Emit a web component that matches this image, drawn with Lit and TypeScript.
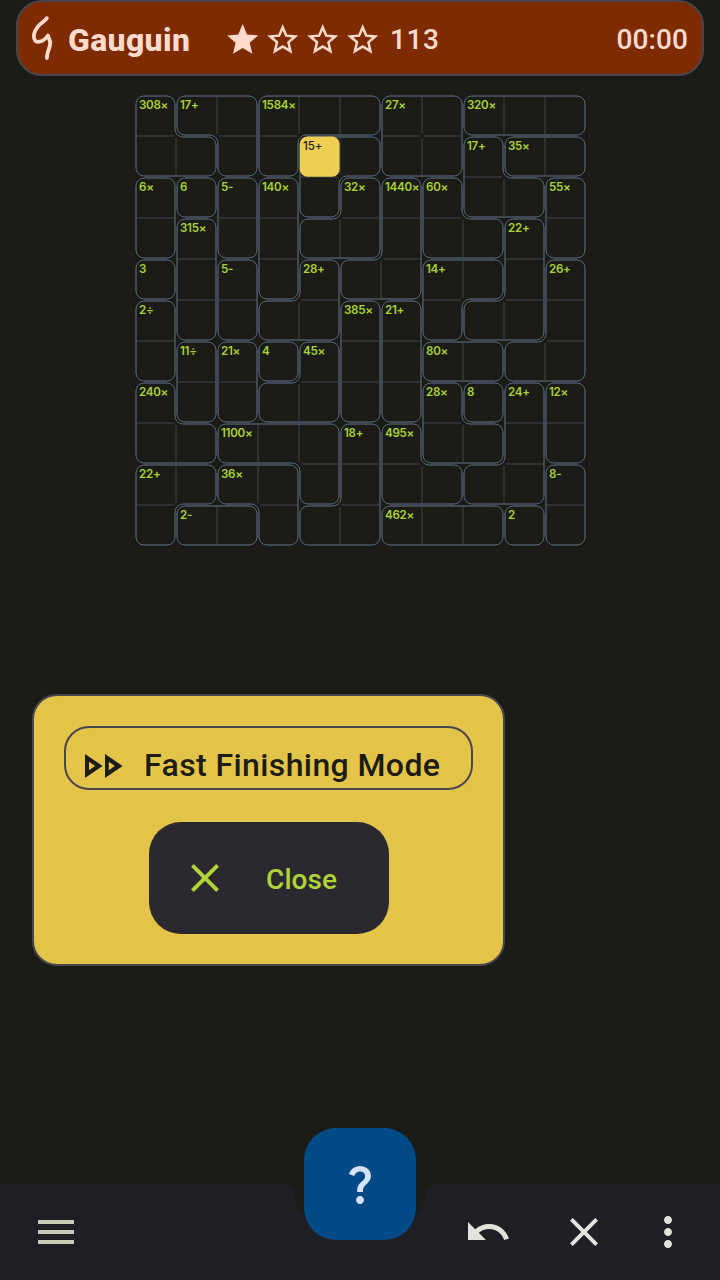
import { LitElement, html, css, svg } from "lit";
import { customElement, property } from "lit/decorators.js";

/** One letter per cell; cells sharing a letter form a cage. */
const CAGES = [
  "ABBCCCDDEEE",
  "AABCFFDDGHH",
  "IJKLFMNOGGP",
  "IQKLMMNOORP",
  "SQTLUNNVVRW",
  "XQTUUYZVRRW",
  "XabcdYZeeWW",
  "fabddYZghij",
  "ffkkklmggij",
  "nnooklmmiip",
  "nqqollrrrsp",
];

const LABELS: Record<string, string> = {
  A: "308×", B: "17+", C: "1584×", D: "27×", E: "320×", F: "15+", G: "17+", H: "35×",
  I: "6×", J: "6", K: "5-", L: "140×", M: "32×", N: "1440×", O: "60×", P: "55×",
  Q: "315×", R: "22+", S: "3", T: "5-", U: "28+", V: "14+", W: "26+", X: "2÷",
  Y: "385×", Z: "21+", a: "11÷", b: "21×", c: "4", d: "45×", e: "80×", f: "240×",
  g: "28×", h: "8", i: "24+", j: "12×", k: "1100×", l: "18+", m: "495×", n: "22+",
  o: "36×", p: "8-", q: "2-", r: "462×", s: "2",
};

const SIZE = 11;
const PITCH = 41;
const RADIUS = 8;
const SELECTED = { row: 1, col: 4 };

const cage = (r: number, c: number) => (CAGES[r] && CAGES[r][c]) || "";

/** Builds the straight cage walls, the rounded corners and the thin inner lines. */
function boardPaths() {
  let walls = "";
  let corners = "";
  let inner = "";
  for (let r = 0; r < SIZE; r++) {
    for (let c = 0; c < SIZE; c++) {
      const id = cage(r, c);
      const mx = (c + 0.5) * PITCH;
      const my = (r + 0.5) * PITCH;
      const half = PITCH / 2;
      // u points out of the cell through a side, v runs along that side
      for (const [ux, uy] of [[0, -1], [1, 0], [0, 1], [-1, 0]]) {
        const vx = -uy;
        const vy = ux;
        const at = (u: number, v: number) => `${mx + ux * u + vx * v} ${my + uy * u + vy * v}`;
        if (cage(r + uy, c + ux) === id) {
          if (ux + uy > 0) inner += `M${at(half, -half + 2)}L${at(half, half - 2)}`;
          continue;
        }
        const end = (s: number) => {
          const side = cage(r + s * vy, c + s * vx) === id;
          const diag = cage(r + uy + s * vy, c + ux + s * vx) === id;
          if (!side) return half - 1 - RADIUS;
          return diag ? half + 1 - RADIUS : half;
        };
        walls += `M${at(half - 1, -end(-1))}L${at(half - 1, end(1))}`;
        if (cage(r + vy, c + vx) !== id) {
          corners += `M${at(half - 1, half - 1 - RADIUS)}A${RADIUS} ${RADIUS} 0 0 1 ${at(half - 1 - RADIUS, half - 1)}`;
        } else if (cage(r + uy + vy, c + ux + vx) === id) {
          corners += `M${at(half - 1, half + 1 - RADIUS)}A${RADIUS} ${RADIUS} 0 0 0 ${at(half - 1 + RADIUS, half + 1)}`;
        }
      }
    }
  }
  return { walls, corners, inner };
}

const ICONS = {
  menu: "M3 18h18v-2H3v2zm0-5h18v-2H3v2zm0-7v2h18V6H3z",
  undo: "M12.5 8c-2.65 0-5.05.99-6.9 2.6L2 7v9h9l-3.62-3.62c1.39-1.16 3.16-1.88 5.12-1.88 3.54 0 6.55 2.31 7.6 5.5l2.37-.78C21.08 11.03 17.15 8 12.5 8z",
  close: "M19 6.41L17.59 5 12 10.59 6.41 5 5 6.41 10.59 12 5 17.59 6.41 19 12 13.41 17.59 19 19 17.59 13.41 12z",
  more: "M12 8c1.1 0 2-.9 2-2s-.9-2-2-2-2 .9-2 2 .9 2 2 2zm0 2c-1.1 0-2 .9-2 2s.9 2 2 2 2-.9 2-2-.9-2-2-2zm0 6c-1.1 0-2 .9-2 2s.9 2 2 2 2-.9 2-2-.9-2-2-2z",
  star: "M12 17.27L18.18 21l-1.64-7.03L22 9.24l-7.19-.61L12 2 9.19 8.63 2 9.24l5.46 4.73L5.82 21z",
  starOutline: "M22 9.24l-7.19-.62L12 2 9.19 8.63 2 9.24l5.46 4.73L5.82 21 12 17.27 18.18 21l-1.63-7.03L22 9.24zM12 15.4l-3.76 2.27 1-4.28-3.32-2.88 4.38-.38L12 6.1l1.71 4.04 4.38.38-3.32 2.88 1 4.28L12 15.4z",
  fast: "M15.9 9.86 18.93 12l-3.03 2.14V9.86M6 9.86 9.03 12 6 14.14V9.86M14 6v12l8.8-6L14 6zM4 6v12l8.8-6L4 6z",
  help: "M11.07 12.85c.77-1.39 2.25-2.21 3.11-3.44.91-1.29.4-3.7-2.18-3.7-1.69 0-2.52 1.28-2.87 2.34L6.54 6.96C7.25 4.83 9.18 3 11.99 3c2.35 0 3.96 1.07 4.78 2.41.7 1.15 1.11 3.3.03 4.9-1.2 1.77-2.35 2.31-2.97 3.45-.25.46-.35.76-.35 2.24h-2.89c-.01-.78-.13-2.05.48-3.15zM14 20c0 1.1-.9 2-2 2s-2-.9-2-2 .9-2 2-2 2 .9 2 2z",
};

@customElement("ui-icon")
export class UiIcon extends LitElement {
  @property() name: keyof typeof ICONS = "menu";
  static styles = css`
    :host { display: block; width: 48px; height: 48px; flex: none; }
    .glyph { display: block; width: 100%; height: 100%; fill: currentColor; fill-rule: evenodd; }
  `;
  render() {
    return html`<svg class="glyph" viewBox="0 0 24 24"><path d=${ICONS[this.name]}></path></svg>`;
  }
}

@customElement("puzzle-board")
export class PuzzleBoard extends LitElement {
  static styles = css`
    :host { display: block; position: relative; width: 451px; height: 451px; }
    .cells { display: grid; grid-template-columns: repeat(11, 41px); grid-auto-rows: 41px; position: relative; }
    .cell {
      box-sizing: border-box;
      padding: 3px 0 0 4px;
      font: 600 11.6px/14px Inter, sans-serif;
      letter-spacing: -0.28px;
      color: #abd233;
      white-space: nowrap;
    }
    .cell.selected { color: #1c1c17; font-weight: 500; letter-spacing: -0.1px; }
    .lines { position: absolute; left: 0; top: 0; display: block; fill: none; }
    .inner { stroke: #2c3033; stroke-width: 2; }
    .walls { stroke: #3f4953; stroke-width: 2; }
    .corners { stroke: #56677a; stroke-width: 1; }
    .highlight { fill: #eecf53; }
  `;
  render() {
    const { walls, corners, inner } = boardPaths();
    const seen = new Set<string>();
    const cells = [];
    for (let r = 0; r < SIZE; r++) {
      for (let c = 0; c < SIZE; c++) {
        const id = cage(r, c);
        // the label sits in the topmost, then leftmost, cell of its cage
        const first = !seen.has(id);
        seen.add(id);
        const selected = r === SELECTED.row && c === SELECTED.col;
        cells.push(html`<div class=${selected ? "cell selected" : "cell"}>${first ? LABELS[id] : ""}</div>`);
      }
    }
    return html`
      <svg class="lines" width="451" height="451" viewBox="0 0 451 451">
        ${svg`
          <path class="inner" d=${inner}></path>
          <path class="walls" d=${walls}></path>
          <path class="corners" d=${corners}></path>
          <rect class="highlight" x=${SELECTED.col * PITCH + 0.8} y=${SELECTED.row * PITCH + 0.5} width="39.8" height="40.2" rx="7.5"></rect>
        `}
      </svg>
      <div class="cells">${cells}</div>
    `;
  }
}

@customElement("app-root")
export class AppRoot extends LitElement {
  static styles = css`
    :host {
      display: flex;
      flex-direction: column;
      width: 720px;
      height: 1280px;
      overflow: hidden;
      background: #1c1c17;
      font-family: Roboto, sans-serif;
      font-weight: 500;
    }
    .topbar {
      box-sizing: border-box;
      height: 76px;
      margin: 0 16px;
      padding: 2px 14px 0 12px;
      display: flex;
      align-items: center;
      border: 2px solid #49454f;
      border-radius: 26px;
      background: #7e2b00;
      color: #ffdbce;
      white-space: nowrap;
    }
    .logo { width: 24px; height: 48px; margin-top: -2px; fill: none; stroke: currentColor; stroke-linecap: round; stroke-linejoin: round; }
    .name { box-sizing: border-box; width: 169px; padding: 1px 0 0 14px; font-size: 32px; font-weight: 800; letter-spacing: 0.35px; line-height: 40px; }
    .stars { display: flex; gap: 2.6px; margin-left: 0.7px; margin-top: 1px; }
    .star { width: 37.4px; height: 37.4px; }
    .score { flex: 1; margin-left: 9px; font-size: 28px; letter-spacing: 0.6px; }
    .time { font-size: 28px; letter-spacing: 0.1px; }
    .board { margin: 19px 0 0 135px; }
    .dialog {
      box-sizing: border-box;
      width: 473px;
      height: 272px;
      margin: 148px 0 0 32px;
      padding: 30px;
      display: flex;
      flex-direction: column;
      align-items: center;
      gap: 32px;
      border: 2px solid #49454f;
      border-radius: 25px;
      background: #e3c449;
    }
    .mode {
      box-sizing: border-box;
      width: 409px;
      height: 64px;
      display: flex;
      align-items: center;
      padding: 14px 0 0 11px;
      border: 2px solid #49454f;
      border-radius: 25px;
      color: #1c1c17;
      font-size: 32px;
      white-space: nowrap;
    }
    .mode-icon { margin-top: 2px; }
    .mode-text { margin-left: 19px; letter-spacing: 0.4px; line-height: 40px; }
    .close {
      box-sizing: border-box;
      width: 240px;
      height: 112px;
      padding: 0 32px;
      display: flex;
      align-items: center;
      gap: 37.5px;
      border-radius: 32px;
      background: #2b292f;
      color: #afd43a;
      font-size: 28px;
    }
    .close-text { padding-top: 3px; letter-spacing: 0.1px; }
    .bottom { margin-top: auto; position: relative; height: 96px; display: flex; align-items: center; padding: 0 28px 0 32px; }
    .cradle { position: absolute; left: 0; top: 0; fill: #211f26; }
    .action { position: relative; color: #e4e3db; }
    .action.menu { color: #c8cbb6; margin-right: auto; }
    .action.undo { margin-right: 48px; }
    .action.cancel { margin-right: 36px; }
    .fab {
      position: absolute;
      left: 304px;
      top: -56px;
      width: 112px;
      height: 112px;
      display: grid;
      place-items: center;
      border-radius: 32px;
      background: #004a87;
      color: #d6e3ff;
    }
  `;
  render() {
    return html`
      <header class="topbar">
        <svg class="logo" viewBox="30 14 24 48">
          <path stroke-width="3.8" d="M46.8 18.2C45.500 20.500 42.500 21.800 39.800 24.500C36 28.300 34 32 33.900 36C33.800 40.200 35.800 42 38.400 41.800C42.500 41.500 45.600 39 48 35.500C48.200 38 50 39.500 50.200 42.500C50.400 47 48.200 50 47.600 53C47.200 55.200 47.100 56.500 46.900 58"></path>
        </svg>
        <div class="name">Gauguin</div>
        <div class="stars">
          <ui-icon class="star" name="star"></ui-icon>
          <ui-icon class="star" name="starOutline"></ui-icon>
          <ui-icon class="star" name="starOutline"></ui-icon>
          <ui-icon class="star" name="starOutline"></ui-icon>
        </div>
        <div class="score">113</div>
        <div class="time">00:00</div>
      </header>
      <puzzle-board class="board"></puzzle-board>
      <section class="dialog">
        <div class="mode"><ui-icon class="mode-icon" name="fast"></ui-icon><span class="mode-text">Fast Finishing Mode</span></div>
        <div class="close"><ui-icon name="close"></ui-icon><span class="close-text">Close</span></div>
      </section>
      <nav class="bottom">
        <svg class="cradle" width="720" height="96" viewBox="0 0 720 96">
          <path d="M0 0H284Q291.500 0 293 9Q296 23 306 34L330 48H390L414 34Q424 23 427 9Q428.500 0 436 0H720V96H0Z"></path>
        </svg>
        <ui-icon class="action menu" name="menu"></ui-icon>
        <ui-icon class="action undo" name="undo"></ui-icon>
        <ui-icon class="action cancel" name="close"></ui-icon>
        <ui-icon class="action" name="more"></ui-icon>
        <div class="fab"><ui-icon name="help"></ui-icon></div>
      </nav>
    `;
  }
}
